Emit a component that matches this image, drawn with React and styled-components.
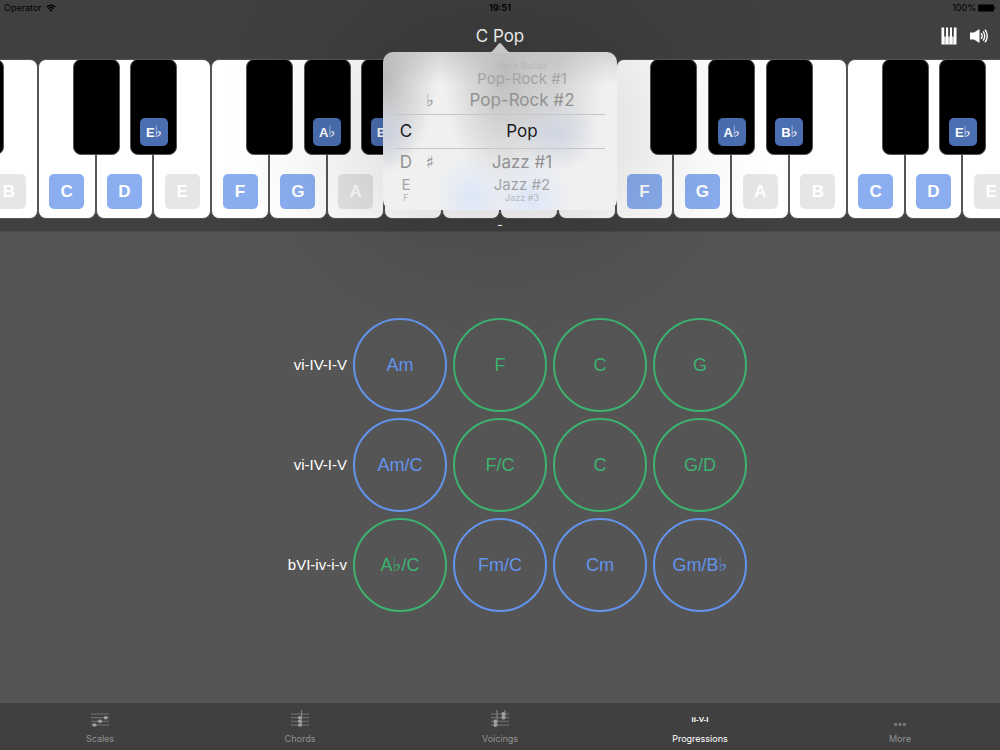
import React from "react"
import styled, { createGlobalStyle } from "styled-components"

const GlobalStyle = createGlobalStyle`
  * {
    box-sizing: border-box;
  }

  body {
    margin: 0;
    background-color: #555555;
    font-family: "Inter", "Liberation Sans", sans-serif;
  }

  button {
    padding: 0;
    border: 0;
    background: none;
    font: inherit;
    color: inherit;
  }
`

// 18 white keys, "black" is the key that sits over the left edge
const octave = [
  { note: "C", on: true },
  { note: "D", on: true, black: " " },
  { note: "E", black: "E♭" },
  { note: "F", on: true },
  { note: "G", on: true, black: " " },
  { note: "A", black: "A♭" },
  { note: "B", black: "B♭" },
]
const keys = [octave[6], ...octave, ...octave, ...octave.slice(0, 3)]

const progressions = [
  { name: "vi-IV-I-V", chords: ["Am", "F", "C", "G"] },
  { name: "vi-IV-I-V", chords: ["Am/C", "F/C", "C", "G/D"] },
  { name: "bVI-iv-i-v", chords: ["A♭/C", "Fm/C", "Cm", "Gm/B♭"] },
]

const isMinor = chord => chord.includes("m")

// the music flat is drawn taller than the letters next to it
const withFlat = (text, big) =>
  text
    .split(/(♭)/)
    .map((part, i) => (part === "♭" ? <Flat key={i} $big={big}>♭</Flat> : part))

const StatusBar = () => (
  <Status>
    <StatusSide>
      Operator
      <svg width="10" height="8" viewBox="0 0 20 15" fill="none" stroke="#000">
        <path d="M1.5 5.5a12 12 0 0 1 17 0" strokeWidth="2.8" />
        <path d="M4.8 9a7.5 7.5 0 0 1 10.4 0" strokeWidth="2.6" />
        <path d="M10 15l-3.2-3.3a4.6 4.6 0 0 1 6.4 0z" fill="#000" stroke="none" />
      </svg>
    </StatusSide>
    <Clock>19:51</Clock>
    <StatusSide $end>
      100%
      <svg width="18" height="8" viewBox="0 0 18 8">
        <rect x="0" y="0.5" width="16" height="7" rx="1.2" />
        <path d="M16.6 2.8c1.3.3 1.3 2.1 0 2.4z" />
      </svg>
    </StatusSide>
  </Status>
)

const PianoIcon = () => (
  <svg width="16" height="18" viewBox="0 0 16 18">
    <rect x="0.5" y="0.5" width="15" height="17" fill="#fff" />
    <path d="M4 9v8.5M8 9v8.5M12 9v8.5" stroke="#777" strokeWidth="0.6" />
    <path d="M3.2 0h1.8v9.500H3.200zM7.100 0h1.800v9.500H7.100zM11 0h1.800v9.500H11z" fill="#404040" />
  </svg>
)

const SoundIcon = () => (
  <svg width="20" height="16" viewBox="0 0 20 16" fill="none" stroke="#fff">
    <path d="M1 4.5h4L10.5 1v14L5 11.5H1z" fill="#fff" stroke="none" />
    <path d="M12 5.2c1.4 1.6 1.4 4 0 5.6" strokeWidth="1.4" />
    <path d="M14 3.4c2.3 2.6 2.3 6.6 0 9.2" strokeWidth="1.4" />
    <path d="M16 1.8c3 3.6 3 8.8 0 12.4" strokeWidth="1.4" />
  </svg>
)

const Staff = ({ children }) => (
  <svg width="18" height="18" viewBox="0 0 18 18" stroke="#929292" fill="#a0a0a0">
    <path d="M0 4h18M0 7.7h18M0 11.3h18M0 15h18" strokeWidth="1" opacity="0.65" />
    {children}
  </svg>
)

const tabs = [
  {
    label: "Scales",
    icon: (
      <Staff>
        <g stroke="none">
          <ellipse cx="3.5" cy="15" rx="2.1" ry="1.7" />
          <ellipse cx="9" cy="11.3" rx="2.1" ry="1.7" />
          <ellipse cx="14.7" cy="7.7" rx="2.1" ry="1.7" />
        </g>
      </Staff>
    ),
  },
  {
    label: "Chords",
    icon: (
      <Staff>
        <g stroke="none">
          <ellipse cx="9" cy="15" rx="2.1" ry="1.8" />
          <ellipse cx="9" cy="11.3" rx="2.1" ry="1.8" />
          <ellipse cx="9" cy="7.7" rx="2.1" ry="1.8" />
        </g>
        <path d="M10.6 0v15" strokeWidth="0.9" />
      </Staff>
    ),
  },
  {
    label: "Voicings",
    icon: (
      <Staff>
        <g stroke="none">
          <ellipse cx="4.4" cy="15" rx="2" ry="1.9" />
          <ellipse cx="4.4" cy="11.5" rx="2" ry="1.9" />
          <ellipse cx="12.4" cy="7.5" rx="2" ry="1.9" />
          <ellipse cx="12.4" cy="4" rx="2" ry="1.9" />
        </g>
        <path d="M6 0v15M14 0v7.5" strokeWidth="0.9" />
      </Staff>
    ),
  },
  { label: "Progressions", icon: <RomanIcon />, active: true },
  {
    label: "More",
    icon: (
      <svg width="18" height="18" viewBox="0 0 18 18" fill="#6a6a6a" stroke="#929292" strokeWidth="0.7">
        <circle cx="4.6" cy="14.5" r="1.2" />
        <circle cx="9" cy="14.5" r="1.2" />
        <circle cx="13.4" cy="14.5" r="1.2" />
      </svg>
    ),
  },
]

function RomanIcon() {
  return <Roman>ii-V-I</Roman>
}

const Picker = () => (
  <Popover>
    <Arrow viewBox="0 0 26 10">
      <path d="M0 10c4 0 6-2.5 8.5-5.5C11 1.5 12 0 13 0s2 1.500 4.500 4.500C20 7.500 22 10 26 10z" />
    </Arrow>
    <PickerRow $size="edge">
      <span />
      <span />
      <PickerName>Rock Ballad</PickerName>
    </PickerRow>
    <PickerRow $size="far">
      <span />
      <span />
      <PickerName>Pop-Rock #1</PickerName>
    </PickerRow>
    <PickerRow $size="near">
      <span />
      <Accidental>♭</Accidental>
      <PickerName>Pop-Rock #2</PickerName>
    </PickerRow>
    <PickerRow $size="selected">
      <span>C</span>
      <span />
      <PickerName>Pop</PickerName>
    </PickerRow>
    <PickerRow $size="near">
      <span>D</span>
      <Accidental>♯</Accidental>
      <PickerName>Jazz #1</PickerName>
    </PickerRow>
    <PickerRow $size="far">
      <span>E</span>
      <span />
      <PickerName>Jazz #2</PickerName>
    </PickerRow>
    <PickerRow $size="edge">
      <span>F</span>
      <span />
      <PickerName>Jazz #3</PickerName>
    </PickerRow>
  </Popover>
)

class App extends React.Component {
  render() {
    return (
      <Page>
        <GlobalStyle />
        <Top>
          <StatusBar />
          <NavBar>
            <Title>
              C Pop
              <Picker />
            </Title>
            <Actions>
              <button aria-label="Keyboard">
                <PianoIcon />
              </button>
              <button aria-label="Sound">
                <SoundIcon />
              </button>
            </Actions>
          </NavBar>
          <Keyboard>
            <Keys>
              {keys.map((key, i) => (
                <WhiteKey key={i}>
                  {key.black && (
                    <BlackKey>
                      {key.black !== " " && (
                        <BlackLabel>{withFlat(key.black)}</BlackLabel>
                      )}
                    </BlackKey>
                  )}
                  <WhiteLabel $on={key.on}>{key.note}</WhiteLabel>
                </WhiteKey>
              ))}
            </Keys>
          </Keyboard>
          <Caption>-</Caption>
        </Top>
        <Main>
          <Grid>
            {progressions.map((row, i) => (
              <React.Fragment key={i}>
                <RowName>{row.name}</RowName>
                {row.chords.map((chord, j) => (
                  <Chord key={j} $minor={isMinor(chord)}>
                    {withFlat(chord, true)}
                  </Chord>
                ))}
              </React.Fragment>
            ))}
          </Grid>
        </Main>
        <TabBar>
          {tabs.map(tab => (
            <Tab key={tab.label} $active={tab.active}>
              {tab.icon}
              {tab.label}
            </Tab>
          ))}
        </TabBar>
      </Page>
    )
  }
}

const Page = styled.div`
  display: flex;
  flex-direction: column;
  min-height: 100vh;
  overflow: hidden;
  color: #ffffff;
`

const Top = styled.header`
  position: relative;
  z-index: 1;
  background-color: #404040;
  border-bottom: 1px solid #4a4a4a;
`

const Status = styled.div`
  display: grid;
  grid-template-columns: 1fr auto 1fr;
  align-items: center;
  height: 16px;
  padding: 0 4px;
  font-size: 9px;
  line-height: 16px;
  color: #000000;
`

const StatusSide = styled.div`
  display: flex;
  align-items: center;
  justify-content: ${props => (props.$end ? "flex-end" : "flex-start")};
  gap: ${props => (props.$end ? "2px" : "4px")};
`

const Clock = styled.time`
  font-weight: 600;
`

const NavBar = styled.div`
  position: relative;
  z-index: 2;
  display: grid;
  grid-template-columns: 1fr auto 1fr;
  align-items: start;
  height: 43px;
  padding: 8px 11px 0;
`

const Title = styled.h1`
  grid-column: 2;
  position: relative;
  margin: 0;
  font-size: 17px;
  line-height: 24px;
  font-weight: 400;
`

const Actions = styled.div`
  display: flex;
  align-items: center;
  justify-content: flex-end;
  gap: 12px;
  height: 24px;

  svg {
    display: block;
  }
`

const Keyboard = styled.div`
  display: flex;
  justify-content: center;
  overflow: hidden;
`

const Keys = styled.div`
  display: flex;
  flex: 0 0 104%;
`

const WhiteKey = styled.div`
  position: relative;
  display: flex;
  flex: 1 1 0;
  align-items: flex-end;
  justify-content: center;
  height: 160px;
  padding-bottom: 9px;
  border: 1px solid #555555;
  border-radius: 8px;
  background-color: #ffffff;
`

const BlackKey = styled.div`
  position: absolute;
  z-index: 1;
  top: -1px;
  left: -24px;
  display: flex;
  align-items: flex-end;
  justify-content: center;
  width: 47px;
  height: 96px;
  padding-bottom: 8px;
  border: 1px solid #555555;
  border-radius: 8px;
  background-color: #000000;
`

const Label = styled.span`
  display: flex;
  align-items: center;
  justify-content: center;
  border-radius: 5px;
  font-family: "Liberation Sans", sans-serif;
  font-weight: 700;
  color: #ffffff;
`

const WhiteLabel = styled(Label)`
  width: 35px;
  height: 35px;
  font-size: 17px;
  background-color: ${props => (props.$on ? "#8aaef0" : "#e6e6e6")};
`

const BlackLabel = styled(Label)`
  width: 28px;
  height: 28px;
  font-size: 13px;
  background-color: #4a6fb2;
`

const Flat = styled.span`
  font-family: "DejaVu Sans", sans-serif;
  font-weight: 400;
  font-size: ${props => (props.$big ? "19px" : "15px")};
  line-height: 1;
`

const Caption = styled.div`
  height: 12px;
  font-size: 12px;
  font-weight: 500;
  line-height: 12px;
  text-align: center;
`

// frosted panel: the dark and blue patches are the keys showing through
const Popover = styled.div`
  position: absolute;
  top: 28px;
  left: 50%;
  display: flex;
  flex-direction: column;
  width: 234px;
  height: 158px;
  margin-left: -117px;
  padding: 9px 12px 0;
  border-radius: 10px;
  background-color: #f0f0f0;
  background-image: radial-gradient(
      ellipse 42px 36px at 174px 82px,
      rgba(200, 208, 226, 0.7),
      rgba(200, 208, 226, 0)
    ),
    radial-gradient(
      ellipse 40px 44px at 89px 146px,
      rgba(216, 228, 250, 0.8),
      rgba(216, 228, 250, 0)
    ),
    radial-gradient(
      ellipse 40px 44px at 147px 146px,
      rgba(216, 228, 250, 0.8),
      rgba(216, 228, 250, 0)
    ),
    radial-gradient(
      ellipse 36px 36px at 0 82px,
      rgba(200, 208, 226, 0.8),
      rgba(200, 208, 226, 0)
    ),
    radial-gradient(
      ellipse 54px 100px at 0 24px,
      rgba(184, 184, 184, 1),
      rgba(184, 184, 184, 0)
    ),
    radial-gradient(
      ellipse 62px 118px at 122px 20px,
      rgba(188, 188, 188, 1),
      rgba(188, 188, 188, 0)
    ),
    radial-gradient(
      ellipse 48px 110px at 174px 14px,
      rgba(188, 188, 188, 0.6),
      rgba(188, 188, 188, 0)
    ),
    linear-gradient(rgba(200, 200, 200, 0.7), rgba(200, 200, 200, 0) 32px);
  box-shadow: 0 0 140px 30px rgba(0, 0, 0, 0.17);
`

const Arrow = styled.svg`
  position: absolute;
  top: -9px;
  left: 50%;
  width: 26px;
  height: 10px;
  margin-left: -13px;
  fill: #c6c6c6;
`

const rowStyles = {
  edge: `
    font-size: 9px;
    line-height: 9px;
    color: #b8b8b8;
  `,
  far: `
    font-size: 15px;
    line-height: 17px;
    color: #a4a4a4;
  `,
  near: `
    font-size: 17px;
    line-height: 27px;
    color: #929292;
  `,
  selected: `
    border-top: 1px solid #c6c6c6;
    border-bottom: 1px solid #c6c6c6;
    font-size: 17px;
    line-height: 33px;
    color: #1c1c1c;
  `,
}

const PickerRow = styled.div`
  display: grid;
  grid-template-columns: 22px 26px 1fr;
  text-align: center;
  ${props => rowStyles[props.$size]}
`

const PickerName = styled.span`
  padding-right: 4px;
`

const Accidental = styled.span`
  font-family: "DejaVu Sans", sans-serif;
  font-size: 17px;
`

const Main = styled.main`
  display: flex;
  flex: 1;
  align-items: center;
  justify-content: center;
  padding-bottom: 6px;
`

const Grid = styled.div`
  display: grid;
  grid-template-columns: repeat(5, 94px);
  gap: 6px;
`

const RowName = styled.div`
  align-self: center;
  font-family: "Liberation Sans", sans-serif;
  font-size: 15px;
  text-align: right;
  white-space: nowrap;
`

const Chord = styled.button`
  width: 94px;
  height: 94px;
  border: 2px solid currentColor;
  border-radius: 50%;
  font-family: "Liberation Sans", sans-serif;
  font-size: 18px;
  line-height: 24px;
  color: ${props => (props.$minor ? "#6394ed" : "#3cb371")};
`

const TabBar = styled.nav`
  display: flex;
  height: 47px;
  background-color: #404040;
`

const Tab = styled.button`
  display: flex;
  flex: 1;
  flex-direction: column;
  align-items: center;
  gap: 5px;
  padding-top: 7px;
  font-size: 9px;
  line-height: 12px;
  color: ${props => (props.$active ? "#ffffff" : "#929292")};
`

const Roman = styled.span`
  height: 18px;
  font-family: "Liberation Sans", sans-serif;
  font-size: 8px;
  line-height: 20px;
  font-weight: 700;
`

export default App
